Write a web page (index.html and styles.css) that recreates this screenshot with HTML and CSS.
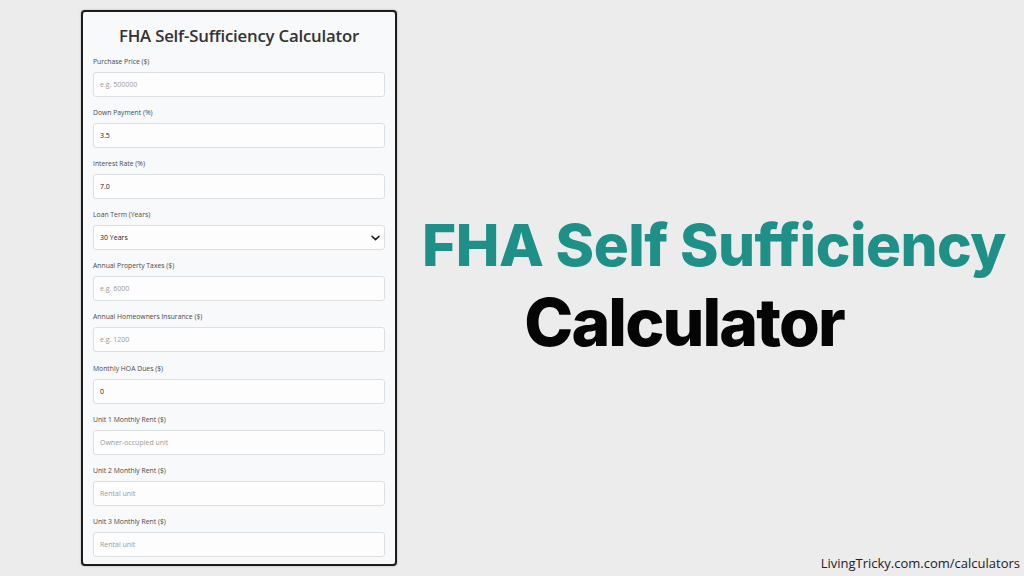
FILE: index.html
```html
<!DOCTYPE html>
<html lang="en">
<head>
<meta charset="utf-8">
<title>FHA Self Sufficiency Calculator</title>
<link rel="stylesheet" href="styles.css">
</head>
<body>
<main class="banner">
  <section class="card">
    <h2 class="card-title">FHA Self-Sufficiency Calculator</h2>
    <div class="field">
      <label class="field-label">Purchase Price ($)</label>
      <input class="field-input" type="text" placeholder="e.g. 500000">
    </div>
    <div class="field">
      <label class="field-label">Down Payment (%)</label>
      <input class="field-input" type="text" value="3.5">
    </div>
    <div class="field">
      <label class="field-label">Interest Rate (%)</label>
      <input class="field-input" type="text" value="7.0">
    </div>
    <div class="field">
      <label class="field-label">Loan Term (Years)</label>
      <div class="field-input select">
        <span>30 Years</span>
        <svg class="chevron" viewBox="0 0 10 6" width="9" height="6"><path d="M1.2 1.2 L5 4.8 L8.8 1.2" fill="none" stroke="#222" stroke-width="1.7" stroke-linecap="round" stroke-linejoin="round"/></svg>
      </div>
    </div>
    <div class="field">
      <label class="field-label">Annual Property Taxes ($)</label>
      <input class="field-input" type="text" placeholder="e.g. 6000">
    </div>
    <div class="field">
      <label class="field-label">Annual Homeowners Insurance ($)</label>
      <input class="field-input" type="text" placeholder="e.g. 1200">
    </div>
    <div class="field">
      <label class="field-label">Monthly HOA Dues ($)</label>
      <input class="field-input" type="text" value="0">
    </div>
    <div class="field">
      <label class="field-label">Unit 1 Monthly Rent ($)</label>
      <input class="field-input" type="text" placeholder="Owner-occupied unit">
    </div>
    <div class="field">
      <label class="field-label">Unit 2 Monthly Rent ($)</label>
      <input class="field-input" type="text" placeholder="Rental unit">
    </div>
    <div class="field">
      <label class="field-label">Unit 3 Monthly Rent ($)</label>
      <input class="field-input" type="text" placeholder="Rental unit">
    </div>
  </section>
  <section class="promo">
    <div class="headline">
      <h1 class="headline-top">FHA Self Sufficiency</h1>
      <div class="headline-bottom">Calculator</div>
    </div>
    <div class="footer">LivingTricky.com.com/calculators</div>
  </section>
</main>
</body>
</html>
```

FILE: styles.css
```css
* { box-sizing: border-box; }
html, body { margin: 0; padding: 0; }
body {
  width: 1024px;
  height: 576px;
  background: #ececec;
  overflow: hidden;
  font-family: "Open Sans", "Liberation Sans", sans-serif;
}
.banner {
  display: flex;
  height: 576px;
  padding: 10px 0 0 81px;
}
.card {
  width: 316px;
  height: 556px;
  background: #f8f9fa;
  border: 2px solid #1c1c1c;
  border-radius: 4px;
  padding: 12px 10px 8px;
  box-shadow: 0 0 2px rgba(0,0,0,0.3);
}
.card-title {
  margin: 0 0 9px;
  text-align: center;
  font-size: 16.8px;
  line-height: 24px;
  font-weight: 600;
  color: #333;
  letter-spacing: -0.2px;
}
.field {
  display: flex;
  flex-direction: column;
  margin-bottom: 11.1px;
}
.field:last-child { margin-bottom: 0; }
.field-label {
  font-size: 6.8px;
  line-height: 10px;
  color: #4a4a4a;
  margin-bottom: 5px;
}
.field-input {
  height: 25px;
  width: 100%;
  border: 1px solid #dcdfe2;
  border-radius: 3px;
  background: #fdfdfd;
  padding: 0 6px;
  font-family: "Open Sans", "Liberation Sans", sans-serif;
  font-size: 7px;
  color: #222;
  outline: none;
}
.field-input::placeholder { color: #9a9a9a; }
.select {
  display: flex;
  align-items: center;
  justify-content: space-between;
  padding-right: 4px;
}
.chevron { display: block; }
.promo {
  flex: 1;
  display: flex;
  flex-direction: column;
  padding: 0 4px 4px 0;
}
.headline {
  flex: 1;
  display: flex;
  flex-direction: column;
  align-items: center;
  padding-top: 203px;
}
.headline-top {
  margin: 0 0 0 11px;
  font-family: "Inter", sans-serif;
  font-weight: 800;
  font-size: 58.4px;
  line-height: 64px;
  color: #1e9088;
  letter-spacing: -0.5px;
  white-space: nowrap;
}
.headline-bottom {
  margin: 9px 49px 0 0;
  font-family: "Inter", sans-serif;
  font-weight: 800;
  font-size: 66px;
  line-height: 72px;
  color: #050505;
  letter-spacing: -1.9px;
  white-space: nowrap;
}
.footer {
  align-self: flex-end;
  font-family: "Open Sans", "Liberation Sans", sans-serif;
  font-size: 13px;
  line-height: 18px;
  color: #222;
}
```
